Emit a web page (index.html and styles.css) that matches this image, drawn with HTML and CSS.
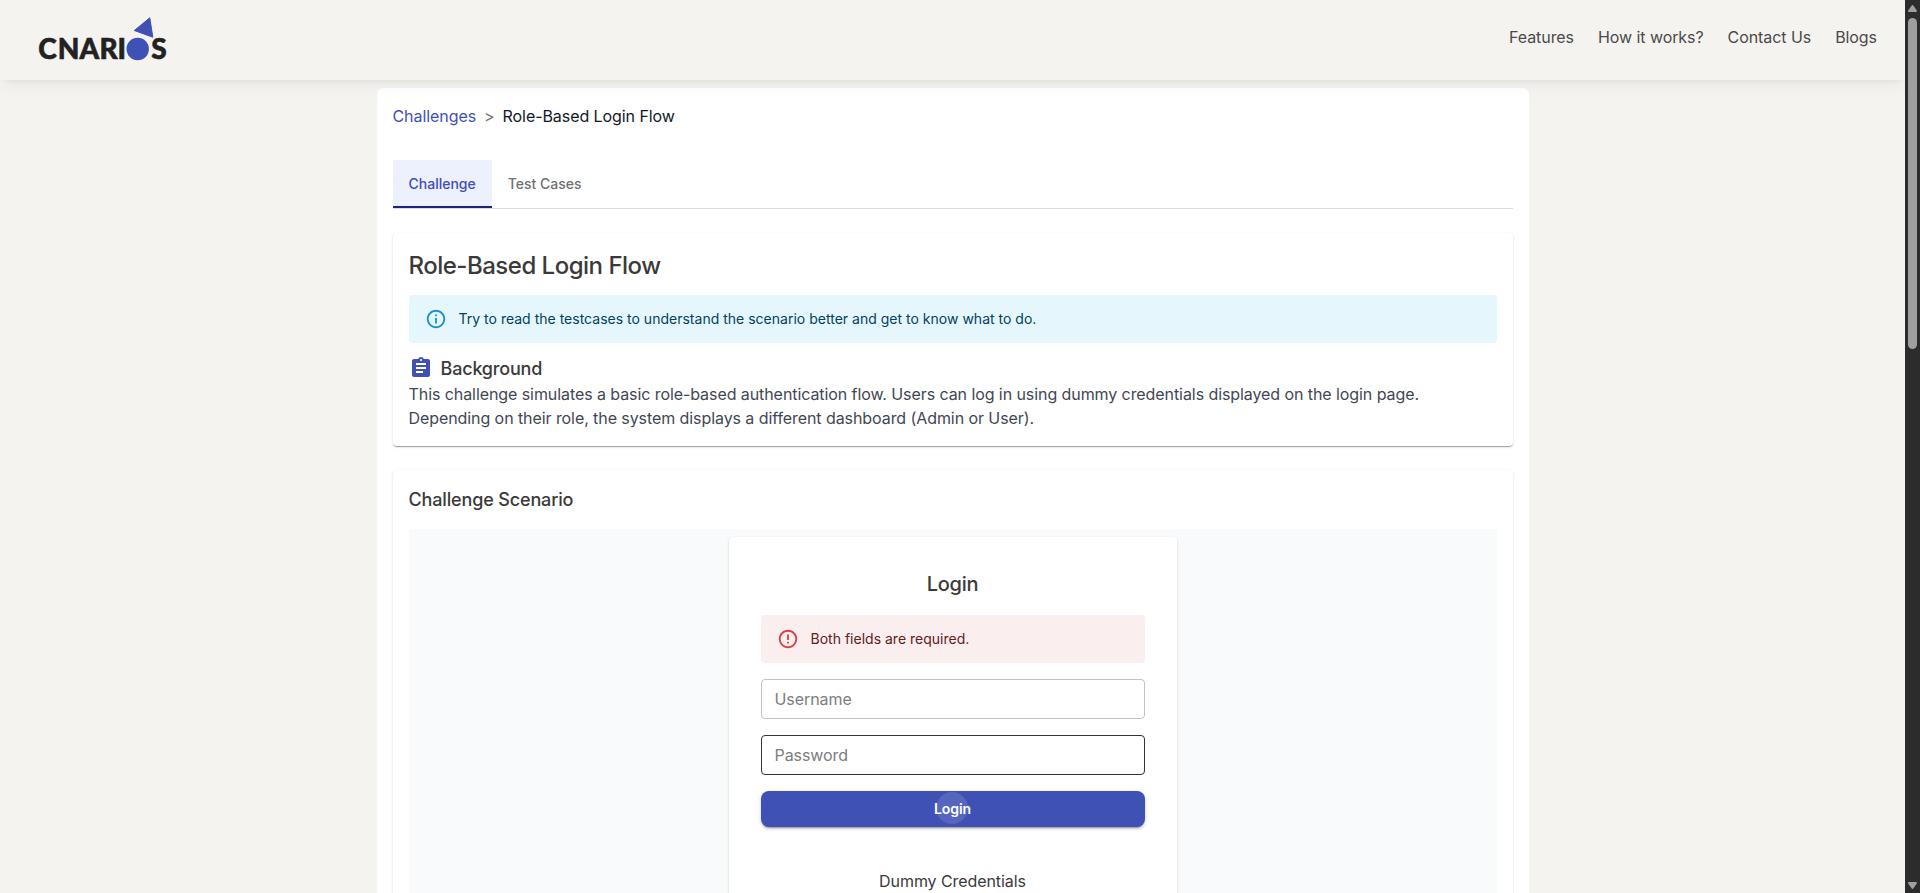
FILE: index.html
```html
<!DOCTYPE html>
<html lang="en">
<head>
<meta charset="utf-8">
<title>Role-Based Login Flow</title>
<link rel="stylesheet" href="styles.css">
</head>
<body>
<div class="window">
  <div class="page">
    <header class="header">
      <svg class="logo" width="150" height="80" viewBox="30 0 150 80">
        <text class="logo-text" y="59" x="38.3 57.7 79.6 99.6 117.4">CNARI</text>
        <text class="logo-text" x="151.3" y="59">S</text>
        <circle cx="137.7" cy="49" r="11.2" fill="#3f51b5"/>
        <path d="M149.8 17.8 L134.3 30.5 L152.8 37.2 Z" fill="#3f51b5" stroke="#3f51b5" stroke-width="1" stroke-linejoin="round"/>
      </svg>
      <nav class="nav"><a>Features</a><a>How it works?</a><a>Contact Us</a><a>Blogs</a></nav>
    </header>
    <main class="content">
      <div class="breadcrumb"><a class="crumb-link">Challenges</a><span class="crumb-sep">&gt;</span><span>Role-Based Login Flow</span></div>
      <div class="tabs"><div class="tab tab-active">Challenge</div><div class="tab">Test Cases</div></div>
      <section class="card intro">
        <h1 class="title">Role-Based Login Flow</h1>
        <div class="alert alert-info">
          <svg class="alert-icon" viewBox="0 0 24 24"><path d="M11 7h2v2h-2zm0 4h2v6h-2zm1-9C6.48 2 2 6.48 2 12s4.48 10 10 10 10-4.48 10-10S17.52 2 12 2m0 18c-4.41 0-8-3.59-8-8s3.59-8 8-8 8 3.59 8 8-3.59 8-8 8"/></svg>
          <span>Try to read the testcases to understand the scenario better and get to know what to do.</span>
        </div>
        <h2 class="subtitle">
          <svg class="clip-icon" viewBox="0 0 24 24"><path d="M19 3h-4.18C14.4 1.84 13.3 1 12 1s-2.4.84-2.82 2H5c-1.1 0-2 .9-2 2v14c0 1.1.9 2 2 2h14c1.1 0 2-.9 2-2V5c0-1.1-.9-2-2-2m-7 0c.55 0 1 .45 1 1s-.45 1-1 1-1-.45-1-1 .45-1 1-1m2 14H7v-2h7zm3-4H7v-2h10zm0-4H7V7h10z"/></svg>
          <span>Background</span>
        </h2>
        <p class="text">This challenge simulates a basic role-based authentication flow. Users can log in using dummy credentials displayed on the login page.<br>Depending on their role, the system displays a different dashboard (Admin or User).</p>
      </section>
      <section class="card scenario">
        <h2 class="section-title">Challenge Scenario</h2>
        <div class="stage">
          <div class="login">
            <h3 class="login-title">Login</h3>
            <div class="alert alert-error">
              <svg class="alert-icon" viewBox="0 0 24 24"><path d="M11 15h2v2h-2zm0-8h2v6h-2zm.99-5C6.47 2 2 6.48 2 12s4.47 10 9.99 10C17.52 22 22 17.52 22 12S17.52 2 11.99 2M12 20c-4.42 0-8-3.58-8-8s3.58-8 8-8 8 3.58 8 8-3.58 8-8 8"/></svg>
              <span>Both fields are required.</span>
            </div>
            <input class="field" type="text" placeholder="Username">
            <input class="field field-hover" type="password" placeholder="Password">
            <button class="submit"><span class="ripple"></span><span class="submit-label">Login</span></button>
            <p class="dummy">Dummy Credentials</p>
          </div>
        </div>
      </section>
    </main>
  </div>
  <div class="scrollbar">
    <svg width="15" height="18" viewBox="0 0 15 18"><path d="M7.5 6 L11 11 H4 Z" fill="#9f9f9f" stroke="#9f9f9f" stroke-width="2" stroke-linejoin="round"/></svg>
    <div class="thumb"></div>
    <svg class="arrow-down" width="15" height="18" viewBox="0 0 15 18"><path d="M7.5 13 L11 8 H4 Z" fill="#9f9f9f" stroke="#9f9f9f" stroke-width="2" stroke-linejoin="round"/></svg>
  </div>
</div>
</body>
</html>
```

FILE: styles.css
```css
* { box-sizing: border-box; }
body { margin: 0; font-family: Inter, sans-serif; font-size: 16px; line-height: 24px; letter-spacing: -0.07px; color: #3f4754; }
h1, h2, h3, p { margin: 0; font-weight: 500; white-space: nowrap; }
.window { display: flex; height: 893px; overflow: hidden; background: #f5f3ef; }
.page { flex: 1; min-width: 0; height: 893px; overflow: hidden; }
.header {
  display: flex; justify-content: space-between; height: 80px; padding: 0 28px 0 30px;
  position: relative; background: #f5f3ef;
  box-shadow: 0 10px 15px -3px rgba(0,0,0,.04), 0 4px 6px -4px rgba(0,0,0,.08);
}
.logo { display: block; }
.logo-text { font: 900 28px Lato, sans-serif; letter-spacing: 0; fill: #222; stroke: #222; stroke-width: .6px; }
.nav { display: flex; gap: 24px; padding-top: 25px; color: #4a4a4a; white-space: nowrap; }
.content { width: 1152px; margin: 8px auto 0; padding: 16px; background: #fff; border-radius: 6px; }
.breadcrumb { display: flex; height: 24px; color: #111827; }
.crumb-link { color: #3f51b5; }
.crumb-sep { margin: 0 8px; color: #757575; }
.tabs { display: flex; height: 49px; margin-top: 32px; border-bottom: 1px solid #ddd; }
.tab { height: 49px; padding: 0 16px; font-size: 14px; font-weight: 500; line-height: 48px; letter-spacing: 0; color: #707070; }
.tab-active { height: 48px; background: #edf0fd; color: #3f51b5; border-bottom: 2px solid #1a237e; }
.card {
  margin-top: 24px; padding: 16px; border-radius: 4px; background: #fff;
  box-shadow: 0 2px 1px -1px rgba(0,0,0,.2), 0 1px 1px 0 rgba(0,0,0,.14), 0 1px 3px 0 rgba(0,0,0,.12);
}
.title { padding-top: 1px; font-size: 24px; line-height: 32px; letter-spacing: -0.5px; color: #3a3a3a; }
.alert { display: flex; align-items: center; flex: none; height: 48px; padding: 0 16px; border-radius: 4px; font-size: 14px; letter-spacing: 0.01px; white-space: nowrap; }
.alert-icon { width: 22px; height: 22px; margin-right: 12px; fill: currentColor; }
.alert-info { margin-top: 13px; background: #e5f6fd; color: #014361; }
.alert-info .alert-icon { color: #0288d1; opacity: .9; }
.alert-error { background: #fbeeee; color: #5f2120; }
.alert-error .alert-icon { color: #d32f2f; opacity: .9; }
.subtitle { display: flex; height: 27px; margin-top: 12px; font-size: 18px; line-height: 27px; letter-spacing: -0.18px; color: #3a3a3a; }
.clip-icon { width: 24px; height: 24px; margin: 1px 8px 0 0; fill: #3f51b5; }
.text { font-weight: 400; letter-spacing: -0.077px; }
.section-title { font-size: 18px; line-height: 27px; letter-spacing: -0.15px; color: #3a3a3a; }
.stage { height: 600px; margin-top: 16px; padding-top: 8px; background: #f9fafb; }
.login {
  display: flex; flex-direction: column; width: 448px; height: 560px; margin: 0 auto; padding: 32px; border-radius: 4px; background: #fff;
  box-shadow: 0 2px 1px -1px rgba(0,0,0,.2), 0 1px 1px 0 rgba(0,0,0,.14), 0 1px 3px 0 rgba(0,0,0,.12);
}
.login-title { margin-bottom: 16px; font-size: 20px; line-height: 30px; letter-spacing: -0.25px; text-align: center; color: #3a3a3a; }
.field { height: 40px; margin: 16px 0 0; padding: 0 13px; border: 1px solid #c1c1c1; border-radius: 4px; font: 400 16px Inter, sans-serif; letter-spacing: -0.07px; background: #fff; outline: 0; }
.field::placeholder { color: #7d7d7d; opacity: 1; }
.field-hover { border-color: #333; }
.submit {
  position: relative; height: 36px; margin-top: 16px; padding: 0; border: 0; border-radius: 8px; background: #3f51b5; color: #fff;
  font: 600 14px/36px Inter, sans-serif; letter-spacing: -0.1px;
  box-shadow: 0 3px 1px -2px rgba(0,0,0,.2), 0 2px 2px 0 rgba(0,0,0,.14), 0 1px 5px 0 rgba(0,0,0,.12);
}
.ripple { position: absolute; left: calc(50% - 17px); top: 1px; width: 32px; height: 32px; border-radius: 50%; background: rgba(255,255,255,.12); }
.submit-label { position: relative; }
.dummy { margin-top: 42px; font-weight: 400; text-align: center; color: #3a3a3a; }
.scrollbar { display: flex; flex-direction: column; width: 15px; height: 893px; background: #2c2c2c; }
.scrollbar svg { display: block; flex: none; }
.thumb { width: 9px; height: 331px; margin-left: 3px; border-radius: 5px; background: #9f9f9f; }
.arrow-down { margin-top: auto; }
```
